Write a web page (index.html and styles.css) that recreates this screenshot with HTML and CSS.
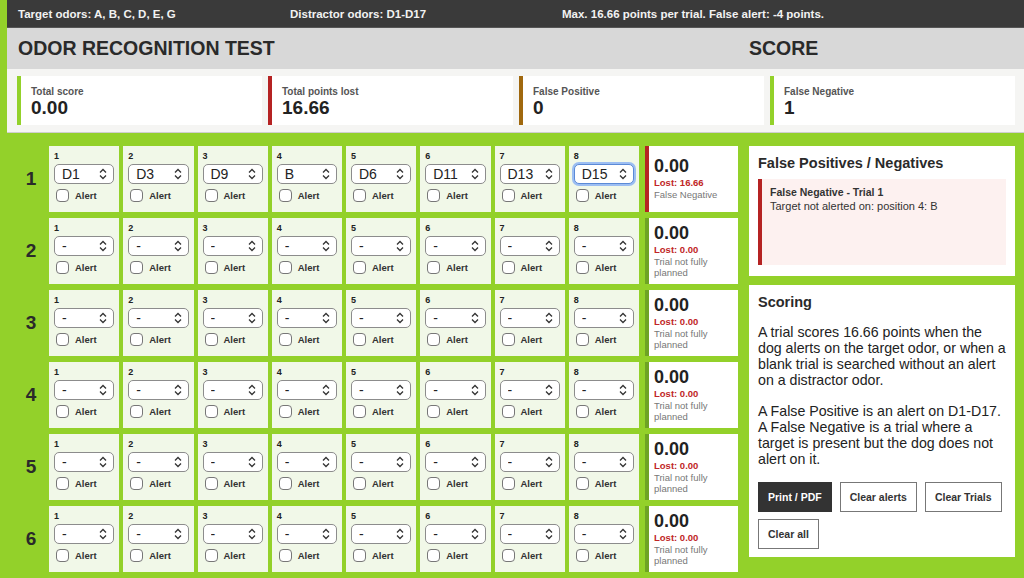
FILE: index.html
```
<html>
<head>
    <link rel="stylesheet" href="styles.css">
    <title>Odor Recognition Test</title>
</head>
<body>
    <div class="topbar">
        <span>Target odors: A, B, C, D, E, G</span>
        <span>Distractor odors: D1-D17</span>
        <span>Max. 16.66 points per trial. False alert: -4 points.</span>
    </div>
    <div class="titlebar">
        <h1>ODOR RECOGNITION TEST</h1>
        <h1>SCORE</h1>
    </div>
    <div class="scorestrip">
        <div class="scard green"><div class="slabel">Total score</div><div class="svalue">0.00</div></div>
        <div class="scard red"><div class="slabel">Total points lost</div><div class="svalue">16.66</div></div>
        <div class="scard brown"><div class="slabel">False Positive</div><div class="svalue">0</div></div>
        <div class="scard green"><div class="slabel">False Negative</div><div class="svalue">1</div></div>
    </div>

    <div class="main">
        <div class="trials" id="trials"></div>

        <div class="side">
            <div class="panel errors">
                <h2>False Positives / Negatives</h2>
                <div class="errbox">
                    <b>False Negative - Trial 1</b>
                    <div>Target not alerted on: position 4: B</div>
                </div>
            </div>
            <div class="panel scoring">
                <h2>Scoring</h2>
                <p>A trial scores 16.66 points when the dog alerts on the target odor, or when a blank trial is searched without an alert on a distractor odor.</p>
                <p>A False Positive is an alert on D1-D17. A False Negative is a trial where a target is present but the dog does not alert on it.</p>
                <div class="buttons">
                    <button class="dark">Print / PDF</button>
                    <button>Clear alerts</button>
                    <button>Clear Trials</button>
                    <button>Clear all</button>
                </div>
            </div>
        </div>
    </div>

    <script type="text/javascript">
        var odors = ["-", "A", "B", "C", "D", "E", "G"];
        for (var d = 1; d <= 17; d++) {
            odors.push("D" + d);
        }
        var planned = [["D1", "D3", "D9", "B", "D6", "D11", "D13", "D15"]];
        var chevron = '<svg class="chev" width="8" height="12" viewBox="0 0 8 12"><path d="M1 4.5 L4 1.5 L7 4.5 M1 7.5 L4 10.5 L7 7.5" fill="none" stroke="#333" stroke-width="1.3"/></svg>';

        function cell(t, p) {
            var val = planned[t] ? planned[t][p] : "-";
            var opts = "";
            for (var i = 0; i < odors.length; i++) {
                opts += "<option" + (odors[i] == val ? ' selected="selected"' : "") + ">" + odors[i] + "</option>";
            }
            var focus = (t == 0 && p == 7) ? " focus" : "";
            return '<div class="cell"><div class="num">' + (p + 1) + '</div>' +
                '<div class="pick' + focus + '"><select>' + opts + '</select>' + chevron + '</div>' +
                '<label class="alert"><input type="checkbox">Alert</label></div>';
        }

        var html = "";
        for (var t = 0; t < 6; t++) {
            html += '<div class="trow"><div class="tnum">' + (t + 1) + '</div>';
            for (var p = 0; p < 8; p++) {
                html += cell(t, p);
            }
            if (t == 0) {
                html += '<div class="result miss"><div class="rscore">0.00</div><div class="lost">Lost: 16.66</div><div class="note">False Negative</div></div>';
            } else {
                html += '<div class="result"><div class="rscore">0.00</div><div class="lost">Lost: 0.00</div><div class="note">Trial not fully planned</div></div>';
            }
            html += '</div>';
        }
        document.getElementById('trials').innerHTML = html;
    </script>
</body>
</html>
```
FILE: styles.css
```
body
{
    margin: 0;
    padding-left: 7px;
    background: #93d12a;
    font-family: "Liberation Sans", Arial, sans-serif;
    color: #222;
    overflow: hidden;
}

/* header: dark info bar, grey title band, score strip */
.topbar
{
    display: grid;
    grid-template-columns: 272px 272px 1fr;
    align-items: center;
    height: 27px;
    padding-left: 11px;
    background: #3a3a3a;
    border-bottom: 1px solid #555;
    color: #f2f2f2;
    font-size: 11.5px;
    font-weight: bold;
}
.titlebar
{
    display: grid;
    grid-template-columns: 731px 1fr;
    align-items: center;
    height: 41px;
    padding-left: 11px;
    background: #d8d8d8;
}
.titlebar h1
{
    margin: 0;
    font-size: 19.5px;
    color: #2a2a2a;
}
.scorestrip
{
    display: grid;
    grid-template-columns: repeat(4, 245px);
    gap: 6px;
    padding: 7px 9px 7px 10px;
    background: #f5f5f3;
    border-bottom: 1px solid #cfcfcf;
}
.scard
{
    height: 49px;
    box-sizing: border-box;
    padding: 10px 10px 0 10px;
    background: #fff;
    border-left: 4px solid #93d12a;
}
.scard.red { border-left-color: #b52323; }
.scard.brown { border-left-color: #a0680e; }
.slabel
{
    font-size: 10px;
    font-weight: bold;
    color: #555;
}
.svalue
{
    font-size: 19px;
    font-weight: bold;
    color: #222;
    line-height: 22px;
}

/* trial grid */
.main
{
    display: grid;
    grid-template-columns: 721px 266px;
    column-gap: 11px;
    padding: 13px 0 0 10px;
}
.trials
{
    display: flex;
    flex-direction: column;
    gap: 6px;
}
.trow
{
    display: grid;
    grid-template-columns: 28px repeat(8, 1fr) 95px;
    column-gap: 4px;
    height: 66px;
}
.tnum
{
    align-self: center;
    text-align: center;
    font-size: 19px;
    font-weight: bold;
    color: #2a2a2a;
}
.cell
{
    background: #f1f8e8;
    padding: 5px 5px 0 5px;
}
.num
{
    font-size: 9px;
    font-weight: bold;
    line-height: 11px;
}
.pick
{
    position: relative;
    height: 20px;
    margin-top: 2px;
    box-sizing: border-box;
    border: 1px solid #8c8c8c;
    border-radius: 5px;
    background: #fff;
}
.pick.focus
{
    border-color: #5b8ad6;
    box-shadow: 0 0 0 2px #9cbef2;
}
.pick select
{
    appearance: none;
    -webkit-appearance: none;
    width: 100%;
    height: 18px;
    border: none;
    background: transparent;
    padding: 0 0 0 7px;
    font-family: "Liberation Sans", Arial, sans-serif;
    font-size: 14px;
    color: #222;
    outline: none;
}
.chev
{
    position: absolute;
    right: 6px;
    top: 3px;
    pointer-events: none;
}
.alert
{
    display: flex;
    align-items: center;
    gap: 6px;
    margin-top: 5px;
    padding-left: 2px;
    font-size: 9.5px;
    font-weight: bold;
    color: #333;
}
.alert input
{
    appearance: none;
    -webkit-appearance: none;
    width: 13px;
    height: 13px;
    margin: 0;
    border: 1px solid #777;
    border-radius: 4px;
    background: #fff;
}
.result
{
    display: flex;
    flex-direction: column;
    justify-content: center;
    margin-left: 2px;
    padding: 0 5px 2px 5px;
    background: #fff;
    border-left: 4px solid #6ea424;
}
.result.miss { border-left-color: #b52323; }
.rscore
{
    font-size: 18px;
    font-weight: bold;
    color: #222;
    line-height: 20px;
}
.lost
{
    margin-top: 1px;
    font-size: 9.5px;
    font-weight: bold;
    line-height: 12px;
    color: #c02626;
}
.note
{
    font-size: 9.5px;
    color: #777;
    line-height: 11px;
}

/* right column */
.side
{
    display: flex;
    flex-direction: column;
    gap: 9px;
}
.panel
{
    background: #fff;
    padding: 9px;
}
.panel h2
{
    margin: 0;
    font-size: 14.5px;
    color: #2a2a2a;
}
.errors
{
    height: 130px;
    box-sizing: border-box;
}
.errbox
{
    height: 86px;
    box-sizing: border-box;
    margin-top: 8px;
    padding: 6px 8px;
    background: #fdf1f0;
    border-left: 4px solid #b52323;
    font-size: 11px;
    line-height: 14px;
    color: #333;
}
.errbox b { font-size: 10.5px; }
.scoring
{
    height: 272px;
    box-sizing: border-box;
}
.scoring p
{
    margin: 14px 0 0 0;
    font-size: 14.2px;
    line-height: 16px;
    color: #222;
}
.scoring p + p { margin-top: 15px; }
.buttons
{
    display: flex;
    flex-wrap: wrap;
    gap: 7px 8px;
    margin-top: 15px;
}
.buttons button
{
    height: 30px;
    padding: 0 9px;
    background: #fff;
    border: 1px solid #777;
    font-family: "Liberation Sans", Arial, sans-serif;
    font-size: 10.5px;
    font-weight: bold;
    color: #333;
}
.buttons button.dark
{
    background: #333;
    border-color: #333;
    color: #fff;
}
```
